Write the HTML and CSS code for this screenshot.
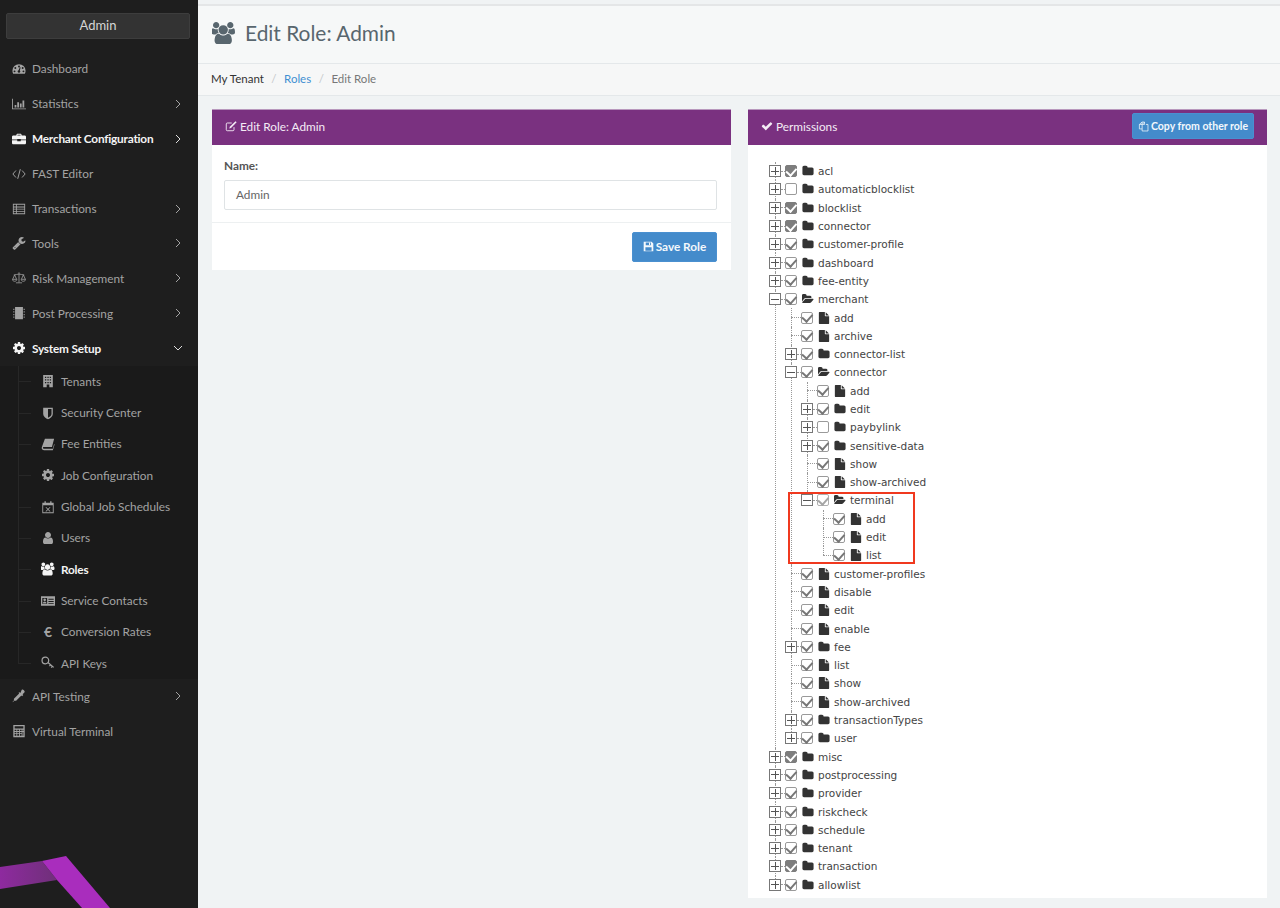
FILE: index.html
```html
<!DOCTYPE html>
<html lang="en">
<head>
<meta charset="utf-8">
<title>Edit Role: Admin</title>
<link rel="stylesheet" href="styles.css">
</head>
<body>
<svg class="defs" aria-hidden="true">
<symbol id="i-users" viewBox="0 0 1920 1792"><path d="M529 896q-162 5-265 128h-134q-82 0-138-40.500t-56-118.500q0-353 124-353 6 0 43.500 21t97.500 42.500 119 21.500q67 0 133-23-5 37-5 66 0 139 81 256zm1071 637q0 120-73 189.500t-194 69.500h-874q-121 0-194-69.500t-73-189.500q0-53 3.500-103.500t14-109 26.500-108.500 43-97.500 62-81 85.500-53.500 111.500-20q10 0 43 21.500t73 48 107 48 135 21.500 135-21.500 107-48 73-48 43-21.500q61 0 111.500 20t85.500 53.500 62 81 43 97.500 26.500 108.500 14 109 3.500 103.500zm-1024-1277q0 106-75 181t-181 75-181-75-75-181 75-181 181-75 181 75 75 181zm704 384q0 159-112.500 271.500t-271.500 112.500-271.500-112.500-112.500-271.500 112.500-271.500 271.500-112.500 271.500 112.500 112.500 271.500zm576 225q0 78-56 118.500t-138 40.500h-134q-103-123-265-128 81-117 81-256 0-29-5-66 66 23 133 23 59 0 119-21.500t97.500-42.500 43.500-21q124 0 124 353zm-128-609q0 106-75 181t-181 75-181-75-75-181 75-181 181-75 181 75 75 181z"/></symbol>
<symbol id="i-check" viewBox="0 0 1792 1792"><path d="M1671 566q0 40-28 68l-724 724-136 136q-28 28-68 28t-68-28l-136-136-362-362q-28-28-28-68t28-68l136-136q28-28 68-28t68 28l294 295 656-657q28-28 68-28t68 28l136 136q28 28 28 68z"/></symbol>
<symbol id="i-folder" viewBox="0 0 1792 1792"><path d="M1728 608v704q0 92-66 158t-158 66h-1216q-92 0-158-66t-66-158v-960q0-92 66-158t158-66h320q92 0 158 66t66 158v32h672q92 0 158 66t66 158z"/></symbol>
<symbol id="i-open" viewBox="0 0 1920 1792"><path d="M1845 931q0 35-35 70l-336 396q-43 51-120.500 86.500t-143.500 35.500h-1088q-34 0-60.500-13t-26.500-43q0-35 35-70l336-396q43-51 120.500-86.500t143.500-35.500h1088q34 0 60.500 13t26.500 43zm-343-345v160h-832q-94 0-197 47.500t-164 119.500l-337 396-5 6q0-4-.5-12.500t-.5-12.500v-960q0-92 66-158t158-66h320q92 0 158 66t66 158v32h544q92 0 158 66t66 158z"/></symbol>
<symbol id="i-file" viewBox="0 0 1792 1792"><path d="M1152 512v-472q22 14 36 28l408 408q14 14 28 36h-472zm-128 32q0 40 28 68t68 28h544v1056q0 40-28 68t-68 28h-1344q-40 0-68-28t-28-68v-1600q0-40 28-68t68-28h800v544z"/></symbol>
<symbol id="i-gear" viewBox="0 0 1792 1792"><path d="M1152 896q0-106-75-181t-181-75-181 75-75 181 75 181 181 75 181-75 75-181zm512-109v222q0 12-8 23t-20 13l-185 28q-19 54-39 91 35 50 107 138 10 12 10 25t-9 23q-27 37-99 108t-94 71q-12 0-26-9l-138-108q-44 23-91 38-16 136-29 186-7 28-36 28h-222q-14 0-24.500-8.500t-11.500-21.500l-28-184q-49-16-90-37l-141 107q-10 9-25 9-14 0-25-11-126-114-165-168-7-10-7-23 0-12 8-23 15-21 51-66.500t54-70.500q-27-50-41-99l-183-27q-13-2-21-12.500t-8-23.500v-222q0-12 8-23t19-13l186-28q14-46 39-92-40-57-107-138-10-12-10-24 0-10 9-23 26-36 98.500-107.500t94.500-71.500q13 0 26 10l138 107q44-23 91-38 16-136 29-186 7-28 36-28h222q14 0 24.500 8.500t11.500 21.500l28 184q49 16 90 37l142-107q9-9 24-9 13 0 25 10 129 119 165 170 7 8 7 22 0 12-8 23-15 21-51 66.500t-54 70.500q26 50 41 98l183 28q13 2 21 12.500t8 23.500z"/></symbol>
<symbol id="i-user" viewBox="0 0 1792 1792"><path d="M1536 1399q0 109-62.500 187t-150.500 78h-854q-88 0-150.500-78t-62.500-187q0-85 8.500-160.500t31.500-152 58.500-131 94-89 134.500-34.500q131 128 313 128t313-128q76 0 134.500 34.500t94 89 58.500 131 31.500 152 8.500 160.500zm-256-887q0 159-112.500 271.500t-271.500 112.500-271.500-112.500-112.500-271.500 112.500-271.500 271.500-112.500 271.500 112.500 112.500 271.500z"/></symbol>
<symbol id="i-wrench" viewBox="0 0 1792 1792"><path d="M448 1472q0-26-19-45t-45-19-45 19-19 45 19 45 45 19 45-19 19-45zm644-420l-682 682q-37 37-90 37-52 0-91-37l-106-108q-38-36-38-90 0-53 38-91l681-681q39 98 114.500 173.500t173.500 114.500zm634-435q0 39-23 106-47 134-164.500 217.500t-258.500 83.500q-185 0-316.500-131.500t-131.500-316.500 131.500-316.500 316.500-131.500q58 0 121.500 16.500t107.500 46.500q16 11 16 28t-16 28l-293 169v224l193 107q5-3 79-48.500t135.500-81 70.500-35.500q15 0 23.500 10t8.500 25z"/></symbol>
<symbol id="i-dash" viewBox="0 0 16 16"><path fill-rule="evenodd" d="M8 2.500a7.500 7.500 0 0 0-7.500 7.500c0 1.300.3 2.500.9 3.500h13.200c.6-1 .9-2.200.9-3.500A7.500 7.500 0 0 0 8 2.500zM8 4a1.100 1.100 0 1 1 0 2.200A1.100 1.100 0 0 1 8 4zM3.800 5.800a1.100 1.100 0 1 1 0 2.200 1.100 1.100 0 0 1 0-2.200zm8.400 0a1.100 1.100 0 1 1 0 2.200 1.100 1.100 0 0 1 0-2.200zM2.900 9.600a1.100 1.100 0 1 1 0 2.200 1.100 1.100 0 0 1 0-2.200zm10.200 0a1.100 1.100 0 1 1 0 2.200 1.100 1.100 0 0 1 0-2.200zM9.900 6.300l-1 3.300a1.500 1.500 0 1 1-1.400-.3l1.500-3.300z"/></symbol>
<symbol id="i-chart" viewBox="0 0 16 16"><path d="M0 2h1v11h15v1H0zM3 9h2v3H3zM6 6h2v6H6zM9 7.500h2V12H9zM12 4h2v8h-2z"/></symbol>
<symbol id="i-case" viewBox="0 0 16 16"><path fill-rule="evenodd" d="M5 3.500C5 2.700 5.700 2 6.500 2h3c.8 0 1.500.7 1.500 1.500V4h3.500c.8 0 1.500.7 1.500 1.500V8.500H10V8H6v.5H0v-3C0 4.700.7 4 1.500 4H5zM6.200 4h3.600v-.8H6.200zM0 9.500h6v1h4v-1h6v3c0 .8-.7 1.500-1.500 1.500h-13C.7 14 0 13.300 0 12.500z"/></symbol>
<symbol id="i-code" viewBox="0 0 16 16"><path fill="none" stroke="currentColor" stroke-width="1.100" d="M4.500 4 1 8l3.500 4M11.500 4 15 8l-3.500 4M9.500 2.500l-3 11"/></symbol>
<symbol id="i-list" viewBox="0 0 16 16"><path fill-rule="evenodd" d="M1 2h14v12H1zM2 3.200v1.800h2.500V3.200zm3.500 0v1.800H14V3.200zM2 6.200v1.500h2.500V6.200zm3.500 0v1.500H14V6.200zM2 8.700v1.500h2.500V8.700zm3.500 0v1.500H14V8.700zM2 11.200v1.600h2.500v-1.600zm3.500 0v1.600H14v-1.600z"/></symbol>
<symbol id="i-scale" viewBox="0 0 16 16"><path fill="none" stroke="currentColor" stroke-width=".9" d="M8 1.500v11.500M4.500 13.500h7M2 4.500c2 0 4-1 6-1s4 1 6 1M3 4.500.7 9.500h4.600zM13 4.500l-2.300 5h4.600zM.5 9.500c0 3 5 3 5 0M10.500 9.500c0 3 5 3 5 0"/></symbol>
<symbol id="i-chip" viewBox="0 0 16 16"><path d="M3.500 1h9v14h-9zM1.500 3h1.200v1.500H1.500zM1.500 6h1.200v1.500H1.500zM1.500 9h1.200v1.500H1.500zM1.500 12h1.200v1.500H1.500zM13.300 3h1.200v1.500h-1.200zM13.300 6h1.200v1.500h-1.200zM13.300 9h1.200v1.500h-1.200zM13.300 12h1.200v1.500h-1.200z"/></symbol>
<symbol id="i-building" viewBox="0 0 16 16"><path fill-rule="evenodd" d="M2.500 1h11v14h-11zM4.500 3v1.500H6V3zm2.800 0v1.500h1.500V3zM10 3v1.500h1.500V3zM4.500 6v1.500H6V6zm2.800 0v1.500h1.500V6zM10 6v1.500h1.500V6zM4.500 9v1.500H6V9zm2.800 0v1.500h1.500V9zM10 9v1.500h1.500V9zM6.500 12v3h3v-3z"/></symbol>
<symbol id="i-shield" viewBox="0 0 16 16"><path fill-rule="evenodd" d="M2.500 2h11v7c0 3-3 5-5.500 6-2.500-1-5.500-3-5.500-6zM8 3.500v9.800c1.800-.9 4-2.400 4-4.300V3.500z"/></symbol>
<symbol id="i-book" viewBox="0 0 16 16"><path d="M4.500 2H15l-2.500 9.500H3.300c-.8 0-1.200.5-1 1 .2.600.7 1 1.400 1h9.800l1.500-5.500.5.500L13.500 15H3.500C2 15 .8 14 .8 12.500c0-.5.1-.9.300-1.500z"/></symbol>
<symbol id="i-cal" viewBox="0 0 16 16"><path fill-rule="evenodd" d="M1.500 3H4V1.500h1.500V3h5V1.500H12V3h2.500v12h-13zM2.500 6v8h11V6zM5.800 8l2.200 2 2.200-2 .6.600L8.600 10.700l2.200 2.100-.6.600L8 11.300l-2.200 2.100-.6-.6 2.200-2.100-2.200-2.100z"/></symbol>
<symbol id="i-card" viewBox="0 0 16 16"><path fill-rule="evenodd" d="M0 2.500h16v11H0zM1.500 4.500v7h5.500v-7zm7 1v1h6v-1zm0 2.500v1h6V8zm0 2.500v1h6v-1zM4.200 5.200a1.500 1.500 0 1 1 0 3 1.500 1.500 0 0 1 0-3zM2 10.800c0-1.300.9-2 2.200-2s2.200.7 2.200 2z"/></symbol>
<symbol id="i-key" viewBox="0 0 16 16"><path fill="none" stroke="currentColor" stroke-width="1.400" d="M8.300 7.800 14.500 13M11 10l-1.300 1.600M13 11.700l-1.300 1.600M8.800 5.200a3.800 3.800 0 1 1-7.600 0 3.800 3.800 0 0 1 7.600 0z"/></symbol>
<symbol id="i-drop" viewBox="0 0 16 16"><path d="M11 1c.6-.6 1.600-.6 2.600.3 1 1 1.200 2 .5 2.700l-2 2 .8.800-1.400 1.400-.8-.8-6 6H2.500L1 15l-.3-.3 1.500-1.500v-2.200l6-6-.8-.8L8.800 3.800l.8.800z"/></symbol>
<symbol id="i-calc" viewBox="0 0 16 16"><path fill-rule="evenodd" d="M1.500 1h13v14h-13zM3 2.500v2.500h10V2.500zM3 6.500V8h2V6.500zm3 0V8h2V6.500zm3 0V8h2V6.500zm3 0V8h1V6.500zM3 9v1.500h2V9zm3 0v1.500h2V9zm3 0v1.500h2V9zm3 0v4.500h1V9zM3 11.500V13.500h2v-2zm3 0V13.500h2v-2zm3 0V13.500h2v-2z"/></symbol>
<symbol id="i-edit" viewBox="0 0 16 16"><path fill="none" stroke="currentColor" stroke-width="1.200" d="M12 9.500V13c0 .8-.5 1.300-1.300 1.300H3c-.8 0-1.300-.5-1.300-1.300V5.300C1.700 4.500 2.200 4 3 4h6"/><path d="M14 1.500l1.500 1.500-7.500 7.500-2.300.7.700-2.200z"/></symbol>
<symbol id="i-save" viewBox="0 0 16 16"><path fill-rule="evenodd" d="M1 1h11.500L15 3.500V15H1zM4 2.200v4h7.500v-4zM8.700 2.700h1.600v3H8.700zM3.500 9v5h9V9z"/></symbol>
<symbol id="i-copy" viewBox="0 0 16 16"><path fill="none" stroke="currentColor" stroke-width="1.100" d="M9.500 1.500H5.800L2 5v6.500h4M9.500 1.500V5H6v9.500h8.500V5H11.500M6 5l3.500-3.500M2 5h3.800V1.500"/></symbol>
<symbol id="i-right" viewBox="0 0 8 12"><path fill="none" stroke="currentColor" stroke-width="1" d="m2 2 4 4-4 4"/></symbol>
<symbol id="i-down" viewBox="0 0 12 8"><path fill="none" stroke="currentColor" stroke-width="1" d="m2 2 4 4 4-4"/></symbol>
</svg>

<aside class="sidebar">
  <div class="tenant">Admin</div>
  <nav class="nav">
    <a class="item"><svg class="ni"><use href="#i-dash"/></svg><span>Dashboard</span></a>
    <a class="item"><svg class="ni"><use href="#i-chart"/></svg><span>Statistics</span><svg class="arr"><use href="#i-right"/></svg></a>
    <a class="item strong"><svg class="ni"><use href="#i-case"/></svg><span>Merchant Configuration</span><svg class="arr"><use href="#i-right"/></svg></a>
    <a class="item"><svg class="ni"><use href="#i-code"/></svg><span>FAST Editor</span></a>
    <a class="item"><svg class="ni"><use href="#i-list"/></svg><span>Transactions</span><svg class="arr"><use href="#i-right"/></svg></a>
    <a class="item"><svg class="ni"><use href="#i-wrench"/></svg><span>Tools</span><svg class="arr"><use href="#i-right"/></svg></a>
    <a class="item"><svg class="ni"><use href="#i-scale"/></svg><span>Risk Management</span><svg class="arr"><use href="#i-right"/></svg></a>
    <a class="item"><svg class="ni"><use href="#i-chip"/></svg><span>Post Processing</span><svg class="arr"><use href="#i-right"/></svg></a>
    <a class="item strong"><svg class="ni"><use href="#i-gear"/></svg><span>System Setup</span><svg class="arr down"><use href="#i-down"/></svg></a>
    <div class="submenu">
      <a class="sub-item"><svg class="si"><use href="#i-building"/></svg><span>Tenants</span></a>
      <a class="sub-item"><svg class="si"><use href="#i-shield"/></svg><span>Security Center</span></a>
      <a class="sub-item"><svg class="si"><use href="#i-book"/></svg><span>Fee Entities</span></a>
      <a class="sub-item"><svg class="si"><use href="#i-gear"/></svg><span>Job Configuration</span></a>
      <a class="sub-item"><svg class="si"><use href="#i-cal"/></svg><span>Global Job Schedules</span></a>
      <a class="sub-item"><svg class="si"><use href="#i-user"/></svg><span>Users</span></a>
      <a class="sub-item active"><svg class="si"><use href="#i-users"/></svg><span>Roles</span></a>
      <a class="sub-item"><svg class="si"><use href="#i-card"/></svg><span>Service Contacts</span></a>
      <a class="sub-item"><b class="si euro">€</b><span>Conversion Rates</span></a>
      <a class="sub-item"><svg class="si"><use href="#i-key"/></svg><span>API Keys</span></a>
    </div>
    <a class="item"><svg class="ni"><use href="#i-drop"/></svg><span>API Testing</span><svg class="arr"><use href="#i-right"/></svg></a>
    <a class="item"><svg class="ni"><use href="#i-calc"/></svg><span>Virtual Terminal</span></a>
  </nav>
  <svg class="brand" viewBox="0 0 198 52">
    <defs><linearGradient id="band" x1="0" x2="1" y1="0" y2="0"><stop offset="0" stop-color="#8e2a9f"/><stop offset="1" stop-color="#6f3079"/></linearGradient></defs>
    <polygon fill="url(#band)" points="0,11 42,5 57,24 0,33"/>
    <polygon fill="#a92dbd" points="42,5 66,0 110,52 82,52 57,24"/>
  </svg>
</aside>

<main class="main">
  <header class="title-bar">
    <svg class="title-icon"><use href="#i-users"/></svg>
    <h1>Edit Role: Admin</h1>
  </header>
  <div class="crumbs"><span class="c-first">My Tenant</span><i>/</i><a>Roles</a><i>/</i><span class="c-last">Edit Role</span></div>
  <div class="columns">
    <section class="panel left">
      <div class="panel-head"><div class="ph-title"><svg class="ph-i"><use href="#i-edit"/></svg>Edit Role: Admin</div></div>
      <div class="form">
        <label class="lbl">Name:</label>
        <div class="input">Admin</div>
      </div>
      <div class="form-foot"><button class="btn save"><svg class="b-i"><use href="#i-save"/></svg>Save Role</button></div>
    </section>
    <section class="panel right">
      <div class="panel-head"><div class="ph-title"><svg class="ph-i"><use href="#i-check"/></svg>Permissions</div><button class="btn copy"><svg class="b-i"><use href="#i-copy"/></svg>Copy from other role</button></div>
      <ul class="tree">
        <li><div class="row"><i class="tg plus"></i><i class="cb full"></i><svg class="ic"><use href="#i-folder"/></svg><span>acl</span></div></li>
        <li><div class="row"><i class="tg plus"></i><i class="cb"></i><svg class="ic"><use href="#i-folder"/></svg><span>automaticblocklist</span></div></li>
        <li><div class="row"><i class="tg plus"></i><i class="cb full"></i><svg class="ic"><use href="#i-folder"/></svg><span>blocklist</span></div></li>
        <li><div class="row"><i class="tg plus"></i><i class="cb full"></i><svg class="ic"><use href="#i-folder"/></svg><span>connector</span></div></li>
        <li><div class="row"><i class="tg plus"></i><i class="cb on"></i><svg class="ic"><use href="#i-folder"/></svg><span>customer-profile</span></div></li>
        <li><div class="row"><i class="tg plus"></i><i class="cb on"></i><svg class="ic"><use href="#i-folder"/></svg><span>dashboard</span></div></li>
        <li><div class="row"><i class="tg plus"></i><i class="cb on"></i><svg class="ic"><use href="#i-folder"/></svg><span>fee-entity</span></div></li>
        <li>
          <div class="row"><i class="tg minus"></i><i class="cb on"></i><svg class="ic"><use href="#i-open"/></svg><span>merchant</span></div>
          <ul>
            <li><div class="row"><i class="tg"></i><i class="cb on"></i><svg class="ic"><use href="#i-file"/></svg><span>add</span></div></li>
            <li><div class="row"><i class="tg"></i><i class="cb on"></i><svg class="ic"><use href="#i-file"/></svg><span>archive</span></div></li>
            <li><div class="row"><i class="tg plus"></i><i class="cb on"></i><svg class="ic"><use href="#i-folder"/></svg><span>connector-list</span></div></li>
            <li>
              <div class="row"><i class="tg minus"></i><i class="cb on"></i><svg class="ic"><use href="#i-open"/></svg><span>connector</span></div>
              <ul>
                <li><div class="row"><i class="tg"></i><i class="cb on"></i><svg class="ic"><use href="#i-file"/></svg><span>add</span></div></li>
                <li><div class="row"><i class="tg plus"></i><i class="cb on"></i><svg class="ic"><use href="#i-folder"/></svg><span>edit</span></div></li>
                <li><div class="row"><i class="tg plus"></i><i class="cb"></i><svg class="ic"><use href="#i-folder"/></svg><span>paybylink</span></div></li>
                <li><div class="row"><i class="tg plus"></i><i class="cb on"></i><svg class="ic"><use href="#i-folder"/></svg><span>sensitive-data</span></div></li>
                <li><div class="row"><i class="tg"></i><i class="cb on"></i><svg class="ic"><use href="#i-file"/></svg><span>show</span></div></li>
                <li><div class="row"><i class="tg"></i><i class="cb on"></i><svg class="ic"><use href="#i-file"/></svg><span>show-archived</span></div></li>
                <li class="marked">
                  <div class="row"><i class="tg minus"></i><i class="cb on soft"></i><svg class="ic"><use href="#i-open"/></svg><span>terminal</span></div>
                  <ul>
                    <li><div class="row"><i class="tg"></i><i class="cb on"></i><svg class="ic"><use href="#i-file"/></svg><span>add</span></div></li>
                    <li><div class="row"><i class="tg"></i><i class="cb on"></i><svg class="ic"><use href="#i-file"/></svg><span>edit</span></div></li>
                    <li><div class="row"><i class="tg"></i><i class="cb on"></i><svg class="ic"><use href="#i-file"/></svg><span>list</span></div></li>
                  </ul>
                </li>
              </ul>
            </li>
            <li><div class="row"><i class="tg"></i><i class="cb on"></i><svg class="ic"><use href="#i-file"/></svg><span>customer-profiles</span></div></li>
            <li><div class="row"><i class="tg"></i><i class="cb on"></i><svg class="ic"><use href="#i-file"/></svg><span>disable</span></div></li>
            <li><div class="row"><i class="tg"></i><i class="cb on"></i><svg class="ic"><use href="#i-file"/></svg><span>edit</span></div></li>
            <li><div class="row"><i class="tg"></i><i class="cb on"></i><svg class="ic"><use href="#i-file"/></svg><span>enable</span></div></li>
            <li><div class="row"><i class="tg plus"></i><i class="cb on"></i><svg class="ic"><use href="#i-folder"/></svg><span>fee</span></div></li>
            <li><div class="row"><i class="tg"></i><i class="cb on"></i><svg class="ic"><use href="#i-file"/></svg><span>list</span></div></li>
            <li><div class="row"><i class="tg"></i><i class="cb on"></i><svg class="ic"><use href="#i-file"/></svg><span>show</span></div></li>
            <li><div class="row"><i class="tg"></i><i class="cb on"></i><svg class="ic"><use href="#i-file"/></svg><span>show-archived</span></div></li>
            <li><div class="row"><i class="tg plus"></i><i class="cb on"></i><svg class="ic"><use href="#i-folder"/></svg><span>transactionTypes</span></div></li>
            <li><div class="row"><i class="tg plus"></i><i class="cb on"></i><svg class="ic"><use href="#i-folder"/></svg><span>user</span></div></li>
          </ul>
        </li>
        <li><div class="row"><i class="tg plus"></i><i class="cb full"></i><svg class="ic"><use href="#i-folder"/></svg><span>misc</span></div></li>
        <li><div class="row"><i class="tg plus"></i><i class="cb on"></i><svg class="ic"><use href="#i-folder"/></svg><span>postprocessing</span></div></li>
        <li><div class="row"><i class="tg plus"></i><i class="cb on"></i><svg class="ic"><use href="#i-folder"/></svg><span>provider</span></div></li>
        <li><div class="row"><i class="tg plus"></i><i class="cb on"></i><svg class="ic"><use href="#i-folder"/></svg><span>riskcheck</span></div></li>
        <li><div class="row"><i class="tg plus"></i><i class="cb on"></i><svg class="ic"><use href="#i-folder"/></svg><span>schedule</span></div></li>
        <li><div class="row"><i class="tg plus"></i><i class="cb on"></i><svg class="ic"><use href="#i-folder"/></svg><span>tenant</span></div></li>
        <li><div class="row"><i class="tg plus"></i><i class="cb full"></i><svg class="ic"><use href="#i-folder"/></svg><span>transaction</span></div></li>
        <li><div class="row"><i class="tg plus"></i><i class="cb on"></i><svg class="ic"><use href="#i-folder"/></svg><span>allowlist</span></div></li>
      </ul>
    </section>
  </div>
</main>
</body>
</html>
```
FILE: styles.css
```css
* { box-sizing: border-box; }
html, body { margin: 0; height: 908px; overflow: hidden; }
body { display: flex; background: #f0f3f4; font-family: Lato, sans-serif; font-size: 11.800px; color: #58666e; }
.defs { display: none; }

.sidebar { width: 198px; height: 908px; flex: none; background: #1e1e1e; position: relative; overflow: hidden; color: #a3a3a3; }
.tenant { margin: 13px 8px 0 6px; height: 26px; background: #333; border: 1px solid #3d3d3d; border-radius: 2px; color: #d6d6d6; font-size: 13px; line-height: 23px; text-align: center; }
.nav { margin-top: 12.500px; display: flex; flex-direction: column; }
.item { height: 34.900px; display: flex; align-items: center; padding-left: 12px; position: relative; color: #a3a3a3; font-size: 11.800px; }
.item.strong { color: #f4f4f4; font-weight: 700; letter-spacing: -.2px; }
.ni { width: 14px; height: 14px; fill: currentColor; margin-right: 6px; flex: none; }
.arr { width: 8px; height: 12px; margin-left: auto; margin-right: 16px; flex: none; color: #a3a3a3; }
.arr.down { width: 12px; height: 8px; margin-right: 14px; }
.item.strong .arr { color: #ddd; }
.submenu { background: #1a1a1a; position: relative; }
.submenu::before { content: ""; position: absolute; left: 18px; top: 0; bottom: 15px; border-left: 1px solid #272727; }
.sub-item { height: 31.350px; display: flex; align-items: center; padding-left: 41px; color: #a3a3a3; position: relative; font-size: 11.800px; }
.sub-item::before { content: ""; position: absolute; left: 18px; width: 13px; top: 50%; border-top: 1px solid #272727; }
.sub-item.active { color: #f4f4f4; font-weight: 700; letter-spacing: -.2px; }
.si { width: 14px; height: 14px; fill: currentColor; margin-right: 6px; flex: none; font-style: normal; }
.euro { display: block; font-size: 14px; line-height: 14px; text-align: center; font-weight: 700; }
.brand { position: absolute; left: 0; bottom: 0; width: 198px; height: 52px; display: block; }

.main { flex: 1; min-width: 0; display: flex; flex-direction: column; }
.title-bar { margin-top: 4px; height: 60px; background: #f6f8f8; border-top: 2px solid #e4e6e7; border-bottom: 1px solid #e4e8ea; display: flex; align-items: center; padding-left: 14px; padding-bottom: 3px; }
.title-icon { width: 24px; height: 22px; fill: #58666e; margin-right: 9px; flex: none; margin-top: -1px; }
h1 { margin: 0; font-size: 20.900px; line-height: 28px; font-weight: 400; color: #58666e; }
.crumbs { height: 32px; background: #f6f7f7; border-bottom: 1px solid #e4e8ea; display: flex; align-items: center; padding: 0 0 2px 13px; font-size: 11.500px; }
.crumbs i { font-style: normal; color: #c5c8ca; margin: 0 7.500px; }
.crumbs .c-first { color: #333; }
.crumbs a { color: #3f8fd2; }
.crumbs .c-last { color: #777; }

.columns { padding: 13px 13px 0 14px; display: grid; grid-template-columns: 519px 519px; column-gap: 17px; align-items: start; }
.panel { background: #fff; }
.panel-head { height: 36px; background: #7a3180; border-top: 1px solid #b898bd; color: #f4ecf5; display: flex; align-items: center; justify-content: space-between; padding: 0 13px 3px 13px; font-size: 11.800px; }
.ph-title { display: flex; align-items: center; }
.ph-i { width: 12px; height: 12px; fill: currentColor; margin-right: 3px; flex: none; }
.form { padding: 13px 14px 13px 12px; height: 78px; border-bottom: 1px solid #edf0f1; }
.lbl { display: block; font-weight: 700; color: #555; font-size: 11.800px; line-height: 16px; margin-bottom: 6px; }
.input { height: 30px; border: 1px solid #dfe3e5; border-radius: 2px; padding: 0 11px; line-height: 27px; color: #666; font-size: 11.800px; width: 493px; }
.form-foot { height: 47px; display: flex; justify-content: flex-end; align-items: flex-start; padding: 9px 14px 0; }
.btn { border: 1px solid #4a90d0; background: #448bcb; color: #f3f8fc; border-radius: 2px; font-family: Lato, sans-serif; display: flex; align-items: center; justify-content: center; padding: 0; }
.save { width: 85px; height: 30px; font-size: 11.800px; font-weight: 700; padding-bottom: 1px; }
.copy { width: 122px; height: 26px; font-size: 10.500px; font-weight: 700; }
.b-i { width: 11px; height: 11px; fill: currentColor; margin-right: 2px; flex: none; }

.tree, .tree ul { list-style: none; margin: 0; padding: 0; }
.tree { padding: 17px 0 4px 21px; font-family: "DejaVu Sans", sans-serif; font-size: 10.500px; color: #444; }
.tree ul { margin-left: 16px; }
.tree li { position: relative; }
.tree li::before { content: ""; position: absolute; left: 5.500px; top: 0; bottom: 0; border-left: 1px dotted #999; }
.tree li:last-child::before { bottom: auto; height: 9px; }
.row { height: 18.310px; display: flex; align-items: center; position: relative; }
.tg { width: 12px; height: 12px; flex: none; margin-right: 4px; position: relative; }
.tg::after { content: ""; position: absolute; left: 6px; top: 5.500px; width: 10px; border-top: 1px dotted #999; }
.tg.plus, .tg.minus { border: 1px solid #777; background: #fff linear-gradient(#555, #555) center / 8px 1px no-repeat; }
.tg.plus { background-image: linear-gradient(#555, #555), linear-gradient(#555, #555); background-size: 8px 1px, 1px 8px; background-position: center, center; background-repeat: no-repeat; }
.tg.plus::after, .tg.minus::after { left: 11px; top: 4.500px; width: 4px; }
.cb { width: 12px; height: 12px; flex: none; margin-right: 5px; border: 1.500px solid #9a9a9a; border-radius: 2px; background: #fff; position: relative; }
.cb.on::after, .cb.full::after { content: ""; position: absolute; left: 2.200px; top: -0.500px; width: 5px; height: 7.500px; border: solid #777; border-width: 0 2px 2px 0; transform: rotate(42deg); }
.cb.full { background: #7d7d7d; border-color: #7d7d7d; }
.cb.full::after { border-color: #fff; }
.cb.soft { border-color: #b0b0b0; }
.cb.soft::after { border-color: #a5a5a5; }
.ic { width: 12px; height: 12px; fill: #333; flex: none; margin-right: 4px; }
.marked::after { content: ""; box-sizing: border-box; position: absolute; left: -13px; top: 1px; width: 127px; height: 72px; border: 2px solid #f0391f; pointer-events: none; }
```
